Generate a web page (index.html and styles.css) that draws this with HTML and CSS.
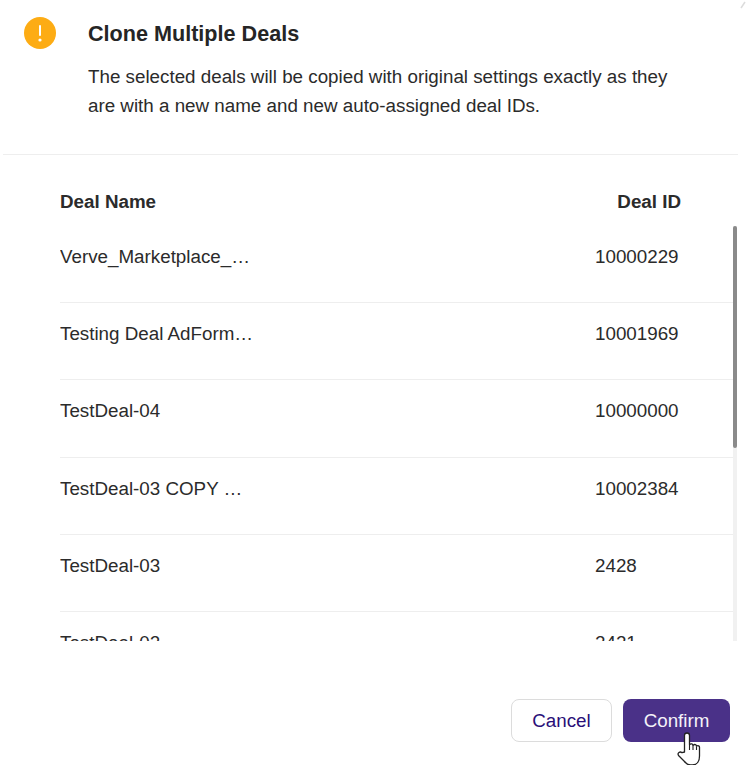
FILE: index.html
```html
<!DOCTYPE html>
<html lang="en">
<head>
    <meta charset="UTF-8">
    <meta name="viewport" content="width=device-width, initial-scale=1.0">
    <title>Clone Multiple Deals</title>
    <link rel="stylesheet" href="styles.css">
</head>
<body>

    <div class="dialog">
        <!-- Faint mark in the corner -->
        <svg class="corner-mark" width="6" height="9" viewBox="0 0 6 9">
            <path d="M1 8L5 2" stroke="#dcdcdc" stroke-width="1.500" fill="none"/>
        </svg>

        <!-- Header -->
        <div class="dialog-head">
            <svg class="warn-icon" width="32" height="32" viewBox="0 0 32 32">
                <circle cx="16" cy="16" r="16" fill="#fdac14"/>
                <rect x="15" y="8" width="2" height="11" rx="1" fill="#fff"/>
                <circle cx="16" cy="23" r="1.6" fill="#fff"/>
            </svg>
            <div class="head-text">
                <h2>Clone Multiple Deals</h2>
                <p>The selected deals will be copied with original settings exactly as they are with a new name and new auto-assigned deal IDs.</p>
            </div>
        </div>

        <!-- Deals table -->
        <div class="table-head">
            <span>Deal Name</span>
            <span class="id-col">Deal ID</span>
        </div>
        <div class="table-wrap">
            <div class="table-body">
                <div class="deal-row"><span class="deal-name">Verve_Marketplace_…</span><span class="deal-id">10000229</span></div>
                <div class="deal-row"><span class="deal-name">Testing Deal AdForm…</span><span class="deal-id">10001969</span></div>
                <div class="deal-row"><span class="deal-name">TestDeal-04</span><span class="deal-id">10000000</span></div>
                <div class="deal-row"><span class="deal-name">TestDeal-03 COPY …</span><span class="deal-id">10002384</span></div>
                <div class="deal-row"><span class="deal-name">TestDeal-03</span><span class="deal-id">2428</span></div>
                <div class="deal-row"><span class="deal-name">TestDeal-02</span><span class="deal-id">2421</span></div>
            </div>
            <div class="scroll-track"><div class="scroll-thumb"></div></div>
        </div>

        <!-- Buttons -->
        <div class="dialog-foot">
            <button class="btn btn-cancel">Cancel</button>
            <button class="btn btn-confirm">Confirm</button>
        </div>
    </div>

    <!-- Mouse pointer over the confirm button -->
    <svg class="hand-cursor" width="26" height="34" viewBox="0 0 26 34">
        <path d="M7.500 20V3.500a2.500 2.500 0 0 1 5 0V12.500l.5-.2a1.800 1.800 0 0 1 3 1l.5-.2a1.700 1.700 0 0 1 3 1l.3-.1a1.700 1.700 0 0 1 2.700 1.500V24c0 5-2.500 9-7 9h-2c-3 0-4.500-1.500-6-3.500L1.500 23.500c-1.500-2.500 1.500-4.500 3.500-2.800z" fill="#fff" stroke="#222" stroke-width="1.300" stroke-linejoin="round"/>
        <path d="M12.500 12.500V18M16 13.500V18M19.500 14.500V18" fill="none" stroke="#222" stroke-width="1.100"/>
    </svg>

</body>
</html>
```

FILE: styles.css
```css
* { box-sizing: border-box; }
html, body {
    height: 100%;
}
body {
    font-family: "Liberation Sans", Arial, sans-serif;
    color: #2b2b2b;
    background-color: #fff;
    margin: 0;
    padding: 0;
    overflow: hidden;
}
.dialog {
    display: flex;
    flex-direction: column;
    height: 765px;
    position: relative;
}
.corner-mark {
    position: absolute;
    top: 0;
    right: 0;
}
.dialog-head {
    display: flex;
    gap: 32px;
    height: 155px;
    margin: 0 8px 0 3px;
    padding: 17px 0 0 21px;
    border-bottom: 1px solid #eeeeee;
}
.warn-icon { flex: none; }
.head-text h2 {
    margin: 5px 0 0;
    font-size: 21.6px;
    line-height: 24px;
    font-weight: bold;
    color: #252525;
}
.head-text p {
    margin: 16px 0 0;
    font-size: 18.8px;
    line-height: 29px;
    max-width: 600px;
}
.table-head {
    display: flex;
    justify-content: space-between;
    width: 621px;
    margin: 35px 0 0 60px;
    font-size: 18.8px;
    line-height: 24px;
    font-weight: bold;
}
.table-wrap {
    position: relative;
    height: 415px;
    margin: 12px 9px 0 60px;
}
.table-body {
    height: 100%;
    margin-right: 4px;
    overflow: hidden;
}
.scroll-track {
    position: absolute;
    top: 0;
    right: 0;
    bottom: 0;
    width: 4px;
    background: #f1f1f1;
}
.scroll-thumb {
    height: 222px;
    background: #8a8a8a;
    border-radius: 2px;
}
.deal-row {
    display: flex;
    height: 77.2px;
    padding-top: 19px;
    font-size: 18.8px;
    line-height: 24px;
    border-bottom: 1px solid #eeeeee;
}
.deal-name {
    width: 196px;
    margin-right: 339px;
    white-space: nowrap;
}
.dialog-foot {
    display: flex;
    justify-content: flex-end;
    gap: 11px;
    margin-top: 58px;
    padding-right: 16px;
}
.btn {
    height: 43px;
    font-family: inherit;
    font-size: 18.8px;
    border-radius: 8px;
    cursor: pointer;
}
.btn-cancel {
    width: 101px;
    background: #fff;
    color: #2a0f78;
    border: 1px solid #dcdcdc;
}
.btn-confirm {
    width: 107px;
    background: #4a3188;
    color: #f4f2f9;
    border: none;
}
.hand-cursor {
    position: absolute;
    left: 677px;
    top: 732px;
}
```
